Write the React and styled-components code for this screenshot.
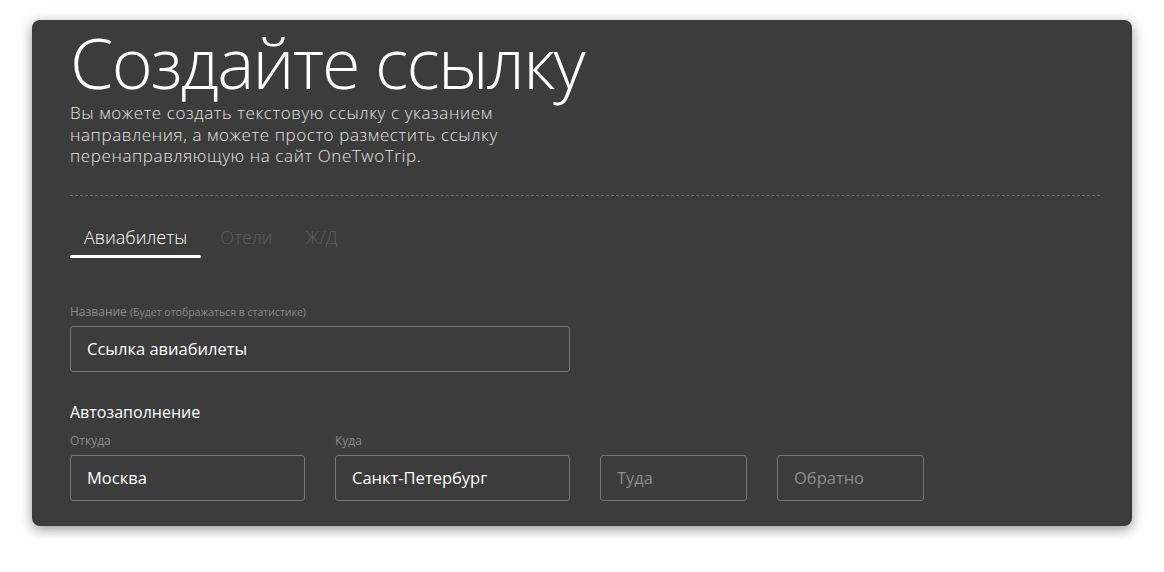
import React from "react"
import styled, { createGlobalStyle } from "styled-components"

const Global = createGlobalStyle`
  html, body {
    margin: 0;
    padding: 0;
    background: #ffffff;
    font-family: "Open Sans", "Noto Sans", sans-serif;
  }
  * { box-sizing: border-box; }
`

const Page = styled.div`
  padding: 20px 32px 0 32px;
  height: 572px;
`

const Card = styled.div`
  width: 1100px;
  height: 506px;
  background: #3c3c3c;
  border-radius: 8px;
  box-shadow: 0 4px 12px rgba(0, 0, 0, 0.35), 0 0 18px rgba(0, 0, 0, 0.08);
  padding: 5px 32px 0 38px;
  color: #fff;
  overflow: hidden;
`

const Title = styled.h1`
  margin: -10px 0 -8px;
  font-weight: 300;
  font-size: 70px;
  line-height: 95px;
  letter-spacing: -1.8px;
`

const Lead = styled.p`
  margin: 0;
  width: 470px;
  font-weight: 300;
  font-size: 17px;
  line-height: 21.5px;
  letter-spacing: 0.6px;
  color: #e4e4e4;
`

const Divider = styled.div`
  margin-top: 28px;
  border-top: 1px dashed #6e6e6e;
`

const Tabs = styled.div`
  display: flex;
  gap: 5px;
  margin-top: 29px;
`

const Tab = styled.div`
  position: relative;
  padding: 0 14px 9px;
  font-size: 18px;
  line-height: 24px;
  font-weight: 300;
  color: ${(p) => (p.$active ? "#fff" : "#5e5e5e")};
  &::after {
    content: "";
    display: ${(p) => (p.$active ? "block" : "none")};
    position: absolute;
    left: 0;
    right: 0;
    bottom: 0;
    height: 2.5px;
    border-radius: 2px;
    background: #fff;
  }
`

const Field = styled.div`
  display: flex;
  flex-direction: column;
  width: ${(p) => p.$w}px;
`

const Label = styled.label`
  font-size: 12px;
  color: #8b8b8b;
  line-height: 16px;
  height: 16px;
  margin-bottom: 6px;
  small {
    font-size: 10.5px;
  }
`

const Input = styled.div`
  height: 46px;
  border: 1px solid #777;
  border-radius: 3px;
  padding: 0 16px;
  display: flex;
  align-items: center;
  font-size: 16.5px;
  color: ${(p) => (p.$placeholder ? "#8c8c8c" : "#fff")};
`

const NameBlock = styled.div`
  margin-top: 46px;
`

const SectionTitle = styled.div`
  margin-top: 30px;
  font-size: 16px;
  line-height: 20px;
  color: #fff;
`

const Row = styled.div`
  display: flex;
  gap: 30px;
  align-items: flex-end;
  margin-top: 11px;
`

export default function App() {
  return (
    <Page>
      <Global />
      <Card>
        <Title>Создайте ссылку</Title>
        <Lead>
          Вы можете создать текстовую ссылку с указанием направления, а можете
          просто разместить ссылку перенаправляющую на сайт OneTwoTrip.
        </Lead>
        <Divider />
        <Tabs>
          <Tab $active>Авиабилеты</Tab>
          <Tab>Отели</Tab>
          <Tab>Ж/Д</Tab>
        </Tabs>
        <NameBlock>
          <Field $w={500}>
            <Label>
              Название <small>(Будет отображаться в статистике)</small>
            </Label>
            <Input>Ссылка авиабилеты</Input>
          </Field>
        </NameBlock>
        <SectionTitle>Автозаполнение</SectionTitle>
        <Row>
          <Field $w={235}>
            <Label>Откуда</Label>
            <Input>Москва</Input>
          </Field>
          <Field $w={235}>
            <Label>Куда</Label>
            <Input>Санкт-Петербург</Input>
          </Field>
          <Field $w={147}>
            <Input $placeholder>Туда</Input>
          </Field>
          <Field $w={147}>
            <Input $placeholder>Обратно</Input>
          </Field>
        </Row>
      </Card>
    </Page>
  )
}
